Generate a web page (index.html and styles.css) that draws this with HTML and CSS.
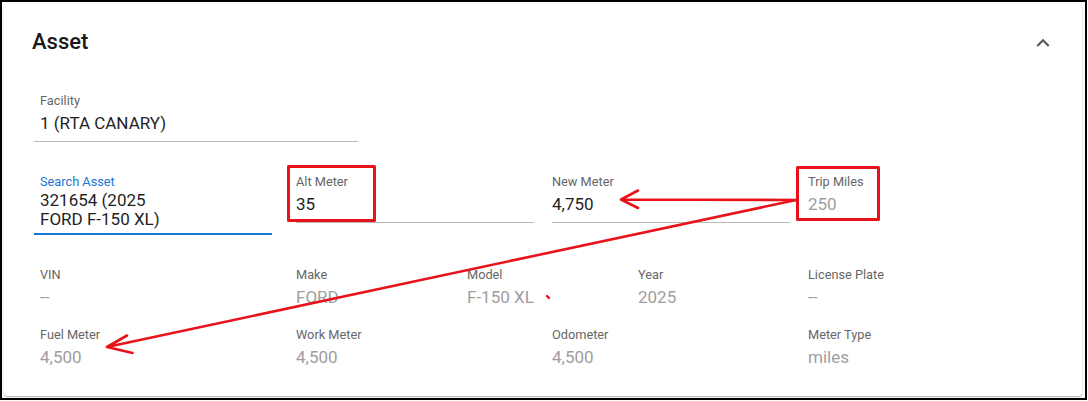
FILE: index.html
```html
<!DOCTYPE html>
<html lang="en">
<head>
<meta charset="utf-8">
<title>Asset</title>
<link rel="stylesheet" href="styles.css">
</head>
<body>
<div class="page">
  <div class="frame">
    <section class="card">
      <header class="card-header">
        <h2 class="title">Asset</h2>
        <svg class="chevron" viewBox="0 0 24 24" aria-hidden="true"><path d="M12 8l-6 6 1.41 1.41L12 10.83l4.59 4.58L18 14z"/></svg>
      </header>
      <div class="card-body">
        <div class="field field--wide field--inset">
          <div class="field-label">Facility</div>
          <div class="field-value">1 (RTA CANARY)</div>
        </div>
        <div class="field-row">
          <div class="field field--inset field--focused">
            <div class="field-label">Search Asset</div>
            <div class="field-value field-value--multi">321654 (2025<br>FORD F-150 XL)</div>
          </div>
          <div class="field">
            <div class="field-label">Alt Meter</div>
            <div class="field-value">35</div>
          </div>
          <div class="field">
            <div class="field-label">New Meter</div>
            <div class="field-value">4,750</div>
          </div>
          <div class="field field--readonly">
            <div class="field-label">Trip Miles</div>
            <div class="field-value">250</div>
          </div>
        </div>
        <div class="details details--first">
          <div class="detail"><div class="detail-label">VIN</div><div class="detail-value">--</div></div>
          <div class="detail"><div class="detail-label">Make</div><div class="detail-value">FORD</div></div>
          <div class="detail"><div class="detail-label">Model</div><div class="detail-value">F-150 XL</div></div>
          <div class="detail"><div class="detail-label">Year</div><div class="detail-value">2025</div></div>
          <div class="detail"><div class="detail-label">License Plate</div><div class="detail-value">--</div></div>
        </div>
        <div class="details details--second">
          <div class="detail"><div class="detail-label">Fuel Meter</div><div class="detail-value">4,500</div></div>
          <div class="detail"><div class="detail-label">Work Meter</div><div class="detail-value">4,500</div></div>
          <div class="detail"><div class="detail-label">Odometer</div><div class="detail-value">4,500</div></div>
          <div class="detail"><div class="detail-label">Meter Type</div><div class="detail-value">miles</div></div>
        </div>
      </div>
    </section>
  </div>
  <svg class="annotations" width="1088" height="401" viewBox="0 0 1088 401" aria-hidden="true">
    <g fill="none" stroke="#e8121b" stroke-linecap="round" stroke-linejoin="round">
      <rect x="288.5" y="166.5" width="86" height="54" stroke-width="3" stroke-linecap="butt"/>
      <rect x="797.5" y="167.5" width="81" height="52" stroke-width="3" stroke-linecap="butt"/>
      <path d="M796 200 L621 199.5 M621 199.5 L638 190.5 M621 199.5 L638 208" stroke-width="2.6"/>
      <path d="M796 200 L107 347 M107 347 L127 335.5 M107 347 L132.5 353" stroke-width="2.6"/>
      <path d="M547 296 L549 298" stroke-width="2.4"/>
    </g>
  </svg>
</div>
</body>
</html>
```
FILE: styles.css
```css
html, body {
  margin: 0;
  padding: 0;
  background: #ffffff;
}

body {
  font-family: Roboto, "Liberation Sans", Arial, sans-serif;
  color: rgba(0, 0, 0, 0.87);
}

.page {
  position: relative;
  width: 1088px;
  height: 401px;
  overflow: hidden;
}

.frame {
  width: 1087px;
  height: 400px;
  box-sizing: border-box;
  border: 2px solid #000;
  padding: 2px 3px 2px 2px;
}

.card {
  height: 100%;
  box-sizing: border-box;
  background: #fff;
  border-radius: 4px;
  box-shadow: 0 2px 1px -1px rgba(0, 0, 0, 0.12),
              0 1px 1px 0 rgba(0, 0, 0, 0.10),
              0 1px 3px 0 rgba(0, 0, 0, 0.16);
}

.card-header {
  display: flex;
  justify-content: space-between;
  align-items: flex-start;
  padding: 24px 25.7px 0 28px;
}

.title {
  margin: 0;
  font-size: 22px;
  line-height: 28px;
  font-weight: 500;
  color: #1a1a1a;
}

.chevron {
  width: 26px;
  height: 26px;
  margin-top: 1.5px;
  fill: #5a5a5a;
}

.card-body {
  padding: 0 0 0 36px;
}

.field {
  display: flex;
  flex-direction: column;
  padding-bottom: 7px;
  border-bottom: 1px solid #b9b9b9;
}

.field--wide {
  width: 324px;
  box-sizing: border-box;
  margin-top: 37px;
}

.field--inset {
  margin-left: -6px;
  padding-left: 6px;
}

.field-label {
  font-size: 12.75px;
  line-height: 16px;
  color: #666666;
}

.field-value {
  margin-top: 4px;
  font-size: 17px;
  line-height: 21px;
  color: #1f1f1f;
}

.field-row {
  display: grid;
  grid-template-columns: repeat(4, 238px);
  column-gap: 18px;
  align-items: start;
  margin-top: 32px;
}

.field--focused {
  margin-right: 6px;
  padding-bottom: 4px;
  border-bottom: 2px solid #1976d2;
}

.field--focused .field-label {
  color: #1976d2;
}

.field-value--multi {
  margin-top: 1px;
  line-height: 19px;
}

.field--readonly {
  border-bottom-color: transparent;
}

.field--readonly .field-value {
  color: #9e9e9e;
}

.details {
  display: grid;
  grid-template-columns: repeat(4, 256px);
}

.details--first {
  grid-template-columns: 256px 171px 171px 170px 256px;
  margin-top: 32px;
}

.details--second {
  margin-top: 19.5px;
}

.detail-label {
  font-size: 12.75px;
  line-height: 16px;
  color: #666666;
}

.detail-value {
  margin-top: 3.5px;
  font-size: 17px;
  line-height: 21px;
  color: #9e9e9e;
}

.annotations {
  position: absolute;
  left: 0;
  top: 0;
  pointer-events: none;
}
```
